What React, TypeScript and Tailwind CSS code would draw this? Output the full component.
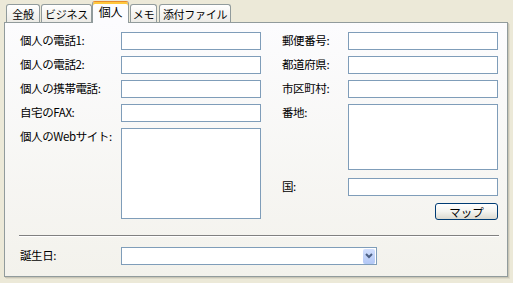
import type { ReactNode } from 'react'

const font = { fontFamily: '"Noto Sans CJK JP", "Noto Sans", sans-serif' }

function Tab({ label, w, active, className = '' }: { label: string; w: string; active?: boolean; className?: string }) {
  if (active) {
    return (
      <div
        className={`relative z-10 -mb-px flex h-[22px] items-center justify-center whitespace-nowrap rounded-t-[3px] border-x border-t border-x-[#919B9C] border-t-[#E68B2C] bg-[#FCFCFE] pb-[2px] text-[12px] leading-[14px] tracking-[-0.3px] text-black shadow-[inset_0_2px_0_#FFC83C] ${w} ${className}`}
      >
        {label}
      </div>
    )
  }
  return (
    <div
      className={`flex h-[18px] items-center justify-center whitespace-nowrap rounded-t-[3px] border-x border-t border-[#919B9C] bg-gradient-to-b from-white to-[#ECEBE6] text-[11px] leading-[14px] tracking-[-0.3px] text-black ${w} ${className}`}
    >
      {label}
    </div>
  )
}

function Row({ label, labelW, children }: { label: string; labelW: string; children: ReactNode }) {
  return (
    <div className="flex items-start">
      <div className={`whitespace-nowrap pt-px text-[11.5px] leading-[14px] tracking-[-0.4px] text-black ${labelW}`}>{label}</div>
      {children}
    </div>
  )
}

function Field({ w, h = 'h-[18px]' }: { w: string; h?: string }) {
  return <div className={`border border-[#7F9DB9] bg-white ${w} ${h}`} />
}

export default function App() {
  return (
    <div className="h-[283px] w-[513px] overflow-hidden bg-[#ECE9D8]" style={font}>
      {/* tabs */}
      <div className="flex h-[22px] items-end pl-[6px]">
        <Tab label="全般" w="w-[34px]" />
        <Tab label="ビジネス" w="w-[51px]" className="ml-px" />
        <Tab label="個人" w="w-[37px]" active />
        <Tab label="メモ" w="w-[27px]" className="ml-px" />
        <Tab label="添付ファイル" w="w-[72px]" className="ml-[2px]" />
      </div>

      {/* panel */}
      <div className="ml-[4px] h-[255px] w-[504px] border border-[#919B9C] bg-gradient-to-b from-[#FCFCFE] to-[#F3F2EC] shadow-[1px_1px_0_#C9C6B6,2px_2px_0_#DEDBCB]">
        <div className="flex pl-[15px] pt-[9px]">
          <div className="flex w-[241px] flex-col gap-[6px]">
            <Row label="個人の電話1:" labelW="w-[101px]"><Field w="w-[140px]" /></Row>
            <Row label="個人の電話2:" labelW="w-[101px]"><Field w="w-[140px]" /></Row>
            <Row label="個人の携帯電話:" labelW="w-[101px]"><Field w="w-[140px]" /></Row>
            <Row label="自宅のFAX:" labelW="w-[101px]"><Field w="w-[140px]" /></Row>
            <Row label="個人のWebサイト:" labelW="w-[101px]"><Field w="w-[140px]" h="h-[91px]" /></Row>
          </div>

          <div className="ml-[21px] flex w-[216px] flex-col">
            <Row label="郵便番号:" labelW="w-[66px]"><Field w="w-[150px]" /></Row>
            <div className="mt-[6px]">
              <Row label="都道府県:" labelW="w-[66px]"><Field w="w-[150px]" /></Row>
            </div>
            <div className="mt-[6px]">
              <Row label="市区町村:" labelW="w-[66px]"><Field w="w-[150px]" /></Row>
            </div>
            <div className="mt-[6px]">
              <Row label="番地:" labelW="w-[66px]"><Field w="w-[150px]" h="h-[66px]" /></Row>
            </div>
            <div className="mt-[8px]">
              <Row label="国:" labelW="w-[66px]"><Field w="w-[150px]" /></Row>
            </div>
            <div className="mt-[7px] flex justify-end">
              <button className="flex h-[17px] w-[63px] items-center justify-center rounded-[3px] border border-[#003C74] bg-gradient-to-b from-white via-[#F4F4F0] to-[#DCDAD0] text-[11.5px] leading-[14px] text-black">
                マップ
              </button>
            </div>
          </div>
        </div>

        {/* separator */}
        <div className="ml-[14px] mt-[15px] h-[2px] w-[480px] border-t border-b border-t-[#808080] border-b-white" />

        {/* birthday */}
        <div className="mt-[10px] pl-[15px]">
          <Row label="誕生日:" labelW="w-[101px]">
            <div className="flex h-[18px] w-[256px] items-center justify-end border border-[#7F9DB9] bg-white pr-px">
              <div className="flex h-[15px] w-[12px] items-center justify-center rounded-[2px] bg-gradient-to-b from-[#D2DFFD] to-[#B2C7F5]">
                <svg width="8" height="6" viewBox="0 0 8 6">
                  <path d="M1 1 L4 4 L7 1" fill="none" stroke="#4D6185" strokeWidth="2" />
                </svg>
              </div>
            </div>
          </Row>
        </div>
      </div>
    </div>
  )
}
